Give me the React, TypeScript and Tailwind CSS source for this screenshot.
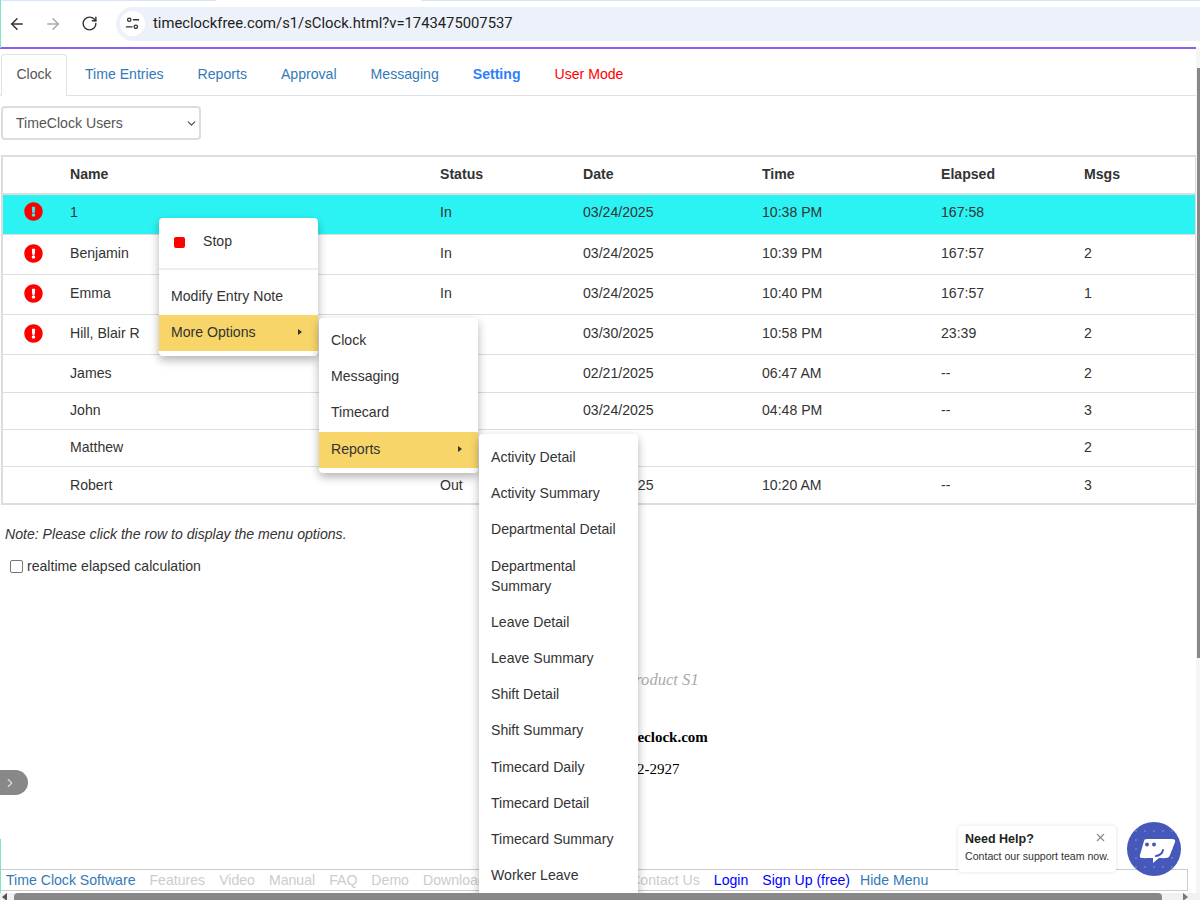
import { ArrowLeft, ArrowRight, RotateCw, ChevronDown, ChevronRight, X } from "lucide-react";
import { FaExclamationCircle } from "react-icons/fa";

const rows = [
  { name: "1", status: "In", date: "03/24/2025", time: "10:38 PM", elapsed: "167:58", msgs: "", alert: true, h: "h-[40px] bg-[#2cf3f3]", pad: "pb-[4px]" },
  { name: "Benjamin", status: "In", date: "03/24/2025", time: "10:39 PM", elapsed: "167:57", msgs: "2", alert: true, h: "h-[40px]", pad: "" },
  { name: "Emma", status: "In", date: "03/24/2025", time: "10:40 PM", elapsed: "167:57", msgs: "1", alert: true, h: "h-[40px]", pad: "" },
  { name: "Hill, Blair R", status: "In", date: "03/30/2025", time: "10:58 PM", elapsed: "23:39", msgs: "2", alert: true, h: "h-[40px]", pad: "" },
  { name: "James", status: "Out", date: "02/21/2025", time: "06:47 AM", elapsed: "--", msgs: "2", alert: false, h: "h-[38px]", pad: "pt-[2px]" },
  { name: "John", status: "Out", date: "03/24/2025", time: "04:48 PM", elapsed: "--", msgs: "3", alert: false, h: "h-[37px]", pad: "" },
  { name: "Matthew", status: "", date: "", time: "", elapsed: "", msgs: "2", alert: false, h: "h-[37px]", pad: "" },
  { name: "Robert", status: "Out", date: "03/24/2025", time: "10:20 AM", elapsed: "--", msgs: "3", alert: false, h: "h-[37px]", pad: "pt-[2px]" },
];

const reportItems = [
  "Activity Detail",
  "Activity Summary",
  "Departmental Detail",
  "Departmental Summary",
  "Leave Detail",
  "Leave Summary",
  "Shift Detail",
  "Shift Summary",
  "Timecard Daily",
  "Timecard Detail",
  "Timecard Summary",
  "Worker Leave",
];

const MenuItem = ({ label, active }: { label: string; active?: boolean }) => (
  <div className={`flex items-center justify-between pl-3 pr-4 pt-[7.1px] pb-[9.1px] leading-[20px] ${active ? "bg-[#f8d568]" : ""}`}>
    <span>{label}</span>
    {active && <span className="w-0 h-0 border-y-[3px] border-y-transparent border-l-[4px] border-l-[#333]" />}
  </div>
);

const ChatIcon = () => (
  <svg viewBox="0 0 54 54" className="w-[54px] h-[54px]">
    <circle cx="27" cy="27" r="27" fill="#4758bb" />
    <g fill="#8f9ade">
      {[9, 18, 27, 36, 45].map((x) =>
        [9, 18, 27, 36, 45].map((y) => <circle key={`${x}-${y}`} cx={x} cy={y} r="0.8" />)
      )}
    </g>
    <path d="M20 17 L45 17 Q49 17 48 20 L43 33 Q42 36 39 36 L32 36 L26 41 L26 36 L15 36 Q12 36 13 33 L17 19 Q17.5 17 20 17 Z" fill="#fff" />
    <circle cx="20" cy="22.5" r="2" fill="#4758bb" />
    <circle cx="27" cy="22.5" r="2" fill="#4758bb" />
    <path d="M29 34 Q35 33 36 28" fill="none" stroke="#4758bb" strokeWidth="2" strokeLinecap="round" />
  </svg>
);

export default function App() {
  return (
    <div className="relative h-[900px] w-[1200px] overflow-hidden bg-white flex flex-col font-['Liberation_Sans',Arial,sans-serif] text-[14.1px] text-[#333]">
      {/* browser chrome */}
      <div className="relative h-[49px] shrink-0 border-b-2 border-[#8b5cf6] mr-[4px]">
        <div className="absolute left-0 top-0 h-[1px] w-[216px] bg-[#d8e6fb]" />
        <div className="absolute left-[421px] top-0 h-[1px] w-[779px] bg-[#d8e6fb]" />
        <div className="flex items-center h-full pl-[8px]">
          <ArrowLeft className="w-[18px] h-[18px] text-[#333]" />
          <ArrowRight className="w-[18px] h-[18px] text-[#aaa] ml-[18px]" />
          <RotateCw className="w-[17px] h-[17px] text-[#333] ml-[19px]" />
          <div className="ml-[18px] flex-1 -mr-[4px] h-[34px] bg-[#edf2fa] rounded-l-full flex items-center pl-[4px]">
            <div className="w-[25px] h-[25px] rounded-full bg-white flex items-center justify-center">
              <svg viewBox="0 0 16 16" className="w-[15px] h-[15px]" fill="none" stroke="#333" strokeWidth="1.4">
                <circle cx="4.5" cy="4" r="1.8" />
                <path d="M8.5 4H15M1 11.5h7" />
                <circle cx="11.5" cy="11.5" r="1.8" />
              </svg>
            </div>
            <span className="ml-[8px] font-['Roboto',sans-serif] text-[14.8px] text-[#222]">timeclockfree.com/s1/sClock.html?v=1743475007537</span>
          </div>
        </div>
      </div>

      {/* tabs */}
      <div className="mt-[5px] mr-[4px] h-[42px] shrink-0 flex border-b border-[#dee2e6]">
        <div className="ml-[1px] w-[66px] h-[42px] flex items-center justify-center border border-b-white border-[#dee2e6] rounded-t bg-white text-[#555]">Clock</div>
        <div className="flex items-center ml-[18px] gap-[34px] text-[#337ab7]">
          <span>Time Entries</span>
          <span>Reports</span>
          <span>Approval</span>
          <span>Messaging</span>
          <span className="font-bold text-[#2b7fff]">Setting</span>
          <span className="text-[#ff0000]">User Mode</span>
        </div>
      </div>

      {/* user group select */}
      <div className="mt-[10px] ml-[1px] w-[200px] h-[34px] shrink-0 flex items-center justify-between pl-[13px] pr-[1px] pt-[1px] border-2 border-[#ddd] rounded text-[#555]">
        <span>TimeClock Users</span>
        <ChevronDown className="w-[13px] h-[13px] text-[#444]" />
      </div>

      {/* users table */}
      <div className="mt-[15px] ml-[1px] mr-[3px] shrink-0 border-2 border-[#ddd]">
        <table className="w-full table-fixed border-collapse">
          <colgroup>
            <col className="w-[59px]" />
            <col className="w-[370px]" />
            <col className="w-[143px]" />
            <col className="w-[179px]" />
            <col className="w-[179px]" />
            <col className="w-[143px]" />
            <col />
          </colgroup>
          <thead>
            <tr className="h-[37px] border-b-2 border-[#ddd] text-left font-bold">
              <th />
              <th className="pl-[8px]">Name</th>
              <th className="pl-[8px]">Status</th>
              <th className="pl-[8px]">Date</th>
              <th className="pl-[8px]">Time</th>
              <th className="pl-[8px]">Elapsed</th>
              <th className="pl-[8px]">Msgs</th>
            </tr>
          </thead>
          <tbody>
            {rows.map((r) => (
              <tr key={r.name} className={`${r.h} border-b border-[#ddd] last:border-b-0`}>
                <td className={`pl-[21px] ${r.pad}`}>{r.alert && <FaExclamationCircle className="-mt-[2px] w-[19px] h-[19px] text-[#ff0000]" />}</td>
                <td className={`pl-[8px] ${r.pad}`}>{r.name}</td>
                <td className={`pl-[8px] ${r.pad}`}>{r.status}</td>
                <td className={`pl-[8px] ${r.pad}`}>{r.date}</td>
                <td className={`pl-[8px] ${r.pad}`}>{r.time}</td>
                <td className={`pl-[8px] ${r.pad}`}>{r.elapsed}</td>
                <td className={`pl-[8px] ${r.pad}`}>{r.msgs}</td>
              </tr>
            ))}
          </tbody>
        </table>
      </div>

      <p className="mt-[19px] ml-[5px] italic leading-[20px]">Note: Please click the row to display the menu options.</p>
      <label className="mt-[12px] ml-[10px] flex items-center gap-[4px] leading-[20px]">
        <span className="w-[13px] h-[13px] rounded-[2px] border border-[#767676] bg-white" />
        realtime elapsed calculation
      </label>

      {/* product info, mostly covered by the open menu */}
      <div className="mt-[92px] text-center font-['Liberation_Serif',serif]">
        <p className="italic text-[16.6px] text-[#aaa] leading-[24px]">Time Clock Free - Product S1</p>
        <p className="mt-[35px] font-bold text-[15px] leading-[20px] text-black">Mail:support@freetimeclock.com</p>
        <p className="mt-[12px] text-[15px] leading-[20px] text-black">Phone: +1 (888) 512-2927</p>
      </div>

      {/* footer nav */}
      <div className="mt-auto mb-[9px] mr-[12px] h-[22px] pt-[1px] shrink-0 flex items-center pl-[6px] border-y border-[#ccc] border-r text-[#ccc] whitespace-nowrap">
        <span className="text-[#337ab7]">Time Clock Software</span>
        <span className="ml-[14px]">Features</span>
        <span className="ml-[14px]">Video</span>
        <span className="ml-[14px]">Manual</span>
        <span className="ml-[14px]">FAQ</span>
        <span className="ml-[14px]">Demo</span>
        <span className="ml-[14px]">Download</span>
        <span className="ml-[14px]">Pricing</span>
        <span className="ml-[14px]">Support</span>
        <span className="ml-[24px]">Contact Us</span>
        <span className="ml-[14px] text-[#0000ff]">Login</span>
        <span className="ml-[14px] text-[#0000ff]">Sign Up (free)</span>
        <span className="ml-[10px] text-[#337ab7]">Hide Menu</span>
      </div>

      {/* context menu */}
      <div className="absolute left-[159px] top-[218px] w-[159px] bg-white rounded shadow-[0_4px_10px_rgba(0,0,0,0.3)] pb-[5px]">
        <div className="flex items-center h-[52px] pb-[2px] pl-[15px] border-b-2 border-[#eee]">
          <span className="w-[11px] h-[11px] rounded-[2px] bg-[#ff0000]" />
          <span className="ml-[18px]">Stop</span>
        </div>
        <div className="pt-[9px]">
          <MenuItem label="Modify Entry Note" />
          <MenuItem label="More Options" active />
        </div>
      </div>

      <div className="absolute left-[319px] top-[318px] w-[159px] bg-white rounded shadow-[0_4px_10px_rgba(0,0,0,0.3)] pt-[5px] pb-[5px]">
        <MenuItem label="Clock" />
        <MenuItem label="Messaging" />
        <MenuItem label="Timecard" />
        <MenuItem label="Reports" active />
      </div>

      <div className="absolute left-[479px] top-[434px] w-[159px] bg-white rounded shadow-[0_4px_10px_rgba(0,0,0,0.3)] pt-[6px] pb-[5px]">
        {reportItems.map((item) => (
          <MenuItem key={item} label={item} />
        ))}
      </div>

      {/* side toggle */}
      <div className="absolute left-0 top-[770px] w-[28px] h-[25px] bg-[#888] rounded-r-full flex items-center pl-[3px]">
        <ChevronRight className="w-[14px] h-[14px] text-[#ddd]" />
      </div>

      {/* help widget */}
      <div className="absolute left-[958px] top-[826px] w-[158px] h-[46px] bg-white rounded shadow-[0_0_4px_rgba(0,0,0,0.12)] pl-[7px] pt-[6px]">
        <div className="font-bold text-[12.5px] leading-[15px] text-[#222]">Need Help?</div>
        <div className="mt-[2px] text-[10.6px] leading-[14px] text-[#333] whitespace-nowrap">Contact our support team now.</div>
        <X className="absolute right-[9px] top-[5px] w-[13px] h-[13px] text-[#888]" />
      </div>
      <div className="absolute left-[1127px] top-[822px]">
        <ChatIcon />
      </div>

      {/* window edge and scrollbars */}
      <div className="absolute left-0 top-0 w-[1px] h-[48px] bg-[#7fe3c8]" />
      <div className="absolute left-0 top-[839px] w-[1px] h-[61px] bg-[#7fe3c8]" />
      <div className="absolute right-0 top-[48px] w-[4px] h-[852px] bg-[#f5f5f5] flex justify-end">
        <div className="mt-[20px] w-[3px] h-[590px] bg-[#888]" />
      </div>
      <div className="absolute left-0 bottom-0 w-[1200px] h-[7px] bg-[#f1f1f1] flex items-center">
        <span className="ml-[2px] w-0 h-0 border-y-[4px] border-y-transparent border-r-[5px] border-r-[#555]" />
        <div className="ml-[7px] w-[1148px] h-[7px] bg-[#888] rounded-t" />
        <span className="ml-[21px] w-0 h-0 border-y-[4px] border-y-transparent border-l-[5px] border-l-[#777]" />
      </div>
    </div>
  );
}
